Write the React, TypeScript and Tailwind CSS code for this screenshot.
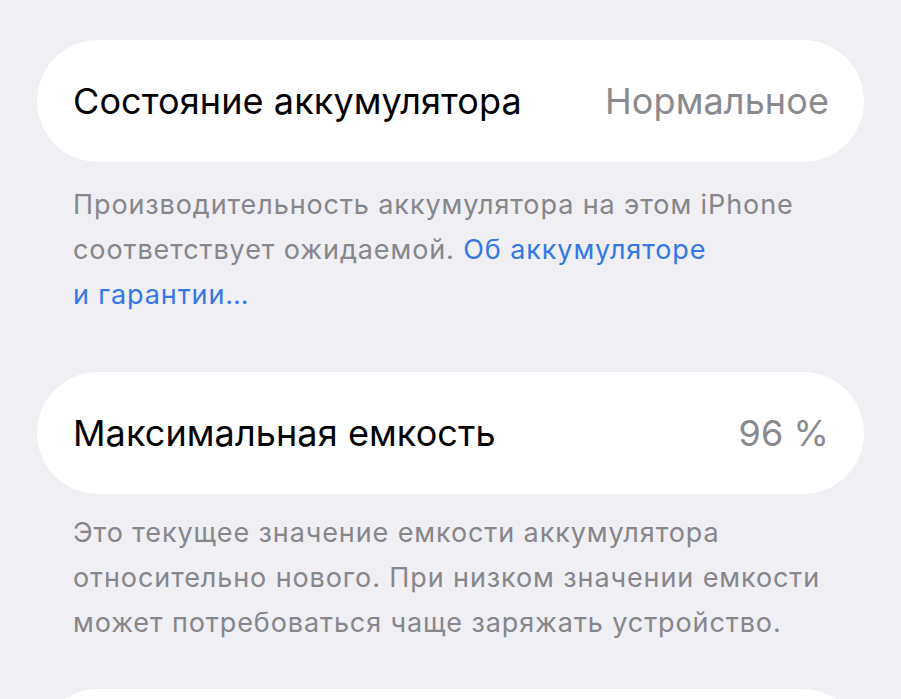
const font = { fontFamily: 'Inter, "Noto Sans", sans-serif' };

function Row({ label, value }: { label: string; value: string }) {
  return (
    <div className="mx-[37px] h-[122px] rounded-[61px] bg-white flex items-center justify-between pl-[36px] pr-[35px]">
      <span className="text-[36px] text-black tracking-[0.1px]">{label}</span>
      <span className="text-[36px] text-[#8a8a8e] tracking-[0.1px]">{value}</span>
    </div>
  );
}

export default function App() {
  return (
    <div className="w-[901px] h-[699px] overflow-hidden bg-[#efeff4]" style={font}>
      <div className="pt-[40px]">
        <Row label="Состояние аккумулятора" value="Нормальное" />
        <p className="mx-[73px] mt-[20px] text-[27px] leading-[45px] tracking-[0.9px] text-[#86868b]">
          Производительность аккумулятора на этом iPhone соответствует ожидаемой.{' '}
          <span className="text-[#3478e8]">Об аккумуляторе</span>
          <br />
          <span className="text-[#3478e8]">и гарантии…</span>
        </p>
        <div className="h-[55px]" />
        <Row label="Максимальная емкость" value="96 %" />
        <p className="mx-[73px] mt-[16px] text-[27px] leading-[45px] tracking-[0.9px] text-[#86868b]">
          Это текущее значение емкости аккумулятора относительно нового. При низком значении емкости может потребоваться чаще заряжать устройство.
        </p>
        <div className="mx-[37px] mt-[44px] h-[122px] rounded-[61px] bg-white" />
      </div>
    </div>
  );
}
